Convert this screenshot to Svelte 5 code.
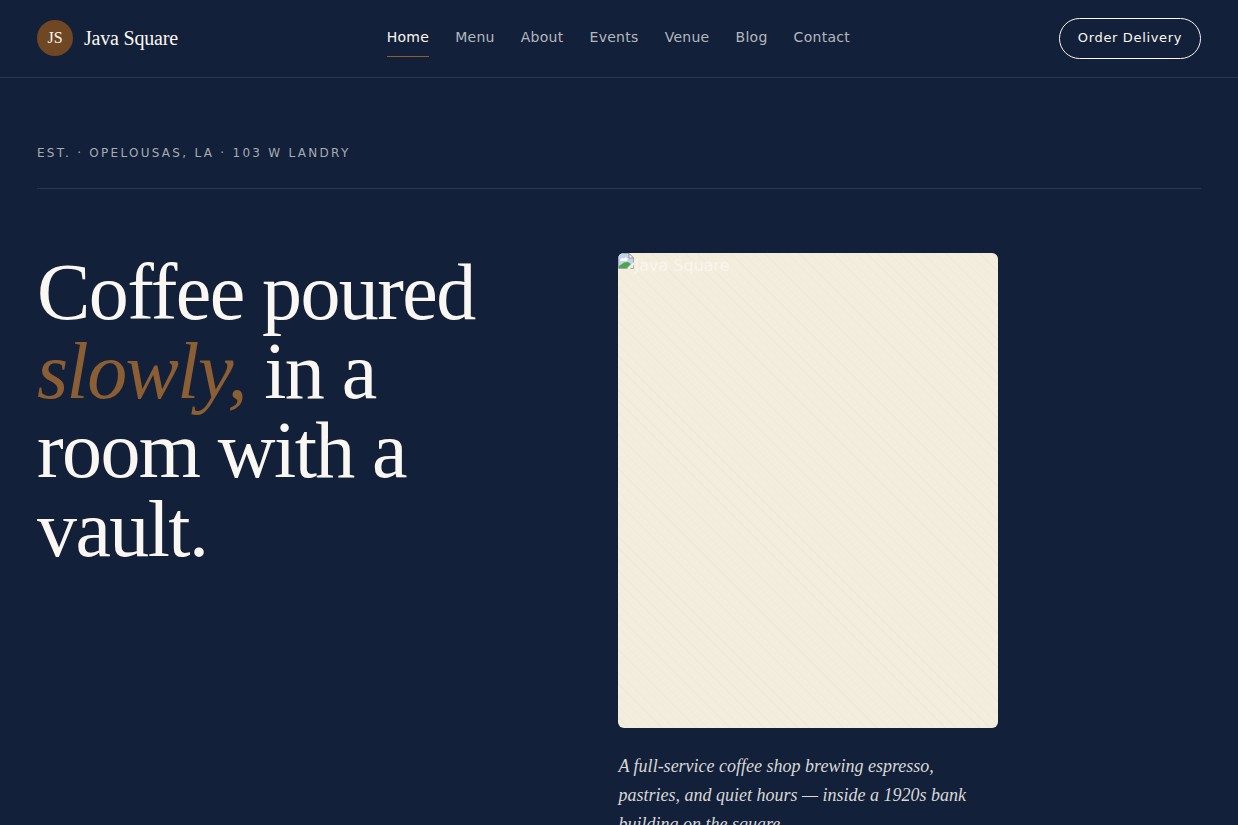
<script>
  const links = ['Home', 'Menu', 'About', 'Events', 'Venue', 'Blog', 'Contact'];

  let current = $state('Home');

  const go = (e, link) => {
    e.preventDefault();
    current = link;
  };
</script>

<header>
  <a class="brand" href="#home">
    <span class="mark">JS</span>
    <span class="name">Java Square</span>
  </a>
  <nav aria-label="Main">
    {#each links as link}
      <a
        href="#{link.toLowerCase()}"
        class:active={link === current}
        onclick={e => go(e, link)}>{link}</a>
    {/each}
  </nav>
  <a class="order" href="#order">Order Delivery</a>
</header>

<main>
  <p class="eyebrow">Est. · Opelousas, LA · 103 W Landry</p>
  <section class="hero">
    <h1>Coffee poured <em>slowly,</em> in a room with a vault.</h1>
    <div class="side">
      <div class="photo">
        <svg width="16" height="16" viewBox="0 0 16 16" aria-hidden="true">
          <path d="M0.5 0.5H11L15.5 5V15.5H0.5Z" fill="#fff" stroke="#a3a8b0" />
          <path d="M1 1H11V5H15V10L10 15H1Z" fill="#c3d2f3" />
          <path d="M2 8C2 5 5 4 6 6C7 3 11 5 9 8Z" fill="#fff" />
          <path d="M1 15V13L6 9.5L10 9L13 11L9 15Z" fill="#4ea64b" />
          <path d="M9 16L16 9V12L12 16Z" fill="#f3eddd" />
          <path d="M11 0.5V5H15.5Z" fill="#fff" stroke="#8d929b" />
        </svg>
        <span>Java Square</span>
      </div>
      <p class="lede">
        A full-service coffee shop brewing espresso, pastries, and quiet hours — inside a 1920s bank building on the square.
      </p>
    </div>
  </section>
</main>

<style>
  :global(body) {
    background: #132039;
    color: #faf7f2;
    font-family: "DejaVu Sans", sans-serif;
  }

  a {
    color: inherit;
    text-decoration: none;
  }

  header {
    display: flex;
    align-items: center;
    justify-content: space-between;
    padding: 18px 37px;
    border-bottom: 1px solid #2d3850;
  }

  .brand {
    display: flex;
    align-items: center;
    gap: 11px;
    padding-bottom: 1px;
    font-family: "Liberation Serif", serif;
  }

  .mark {
    display: grid;
    place-items: center;
    width: 36px;
    height: 36px;
    border-radius: 50%;
    background: #6f4723;
    font-size: 16px;
  }

  .name {
    font-size: 20px;
    letter-spacing: -0.01em;
  }

  nav {
    display: flex;
    gap: 26px;
    font-size: 14px;
    line-height: 20px;
    letter-spacing: 0.02em;
    color: #b4b8be;
  }

  nav a {
    padding: 7px 0 9px;
    border-bottom: 1px solid transparent;
  }

  nav a.active {
    color: #faf7f2;
    border-bottom-color: #8b5e34;
  }

  .order {
    padding: 9px 18px 11px;
    border: 1px solid #faf7f2;
    border-radius: 999px;
    font-size: 13px;
    line-height: 19px;
    letter-spacing: 0.05em;
  }

  main {
    padding: 66px 37px;
  }

  .eyebrow {
    margin: 0 0 64px;
    padding-bottom: 26px;
    border-bottom: 1px solid #2d3850;
    font-size: 12px;
    line-height: 18px;
    letter-spacing: 0.19em;
    text-transform: uppercase;
    color: #a6abb4;
  }

  .hero {
    display: grid;
    grid-template-columns: 5fr 6fr;
    gap: 96px;
  }

  h1 {
    margin: 0;
    font-family: "Liberation Serif", serif;
    font-size: 80px;
    font-weight: 400;
    line-height: 79px;
    letter-spacing: -0.02em;
  }

  h1 em {
    color: #8b5e34;
  }

  .side {
    max-width: 380px;
  }

  .photo {
    display: flex;
    align-items: flex-start;
    aspect-ratio: 4 / 5;
    overflow: hidden;
    border-radius: 6px;
    background: repeating-linear-gradient(45deg, transparent 0 7px, rgba(19, 32, 57, 0.02) 7px 8px), #f3eddd;
    color: #f9f5ec;
    font-size: 16px;
    line-height: 26px;
  }

  .lede {
    margin: 24px 0 0;
    font-family: "Liberation Serif", serif;
    font-size: 18px;
    font-style: italic;
    line-height: 29px;
    color: #d8d8d8;
  }
</style>
